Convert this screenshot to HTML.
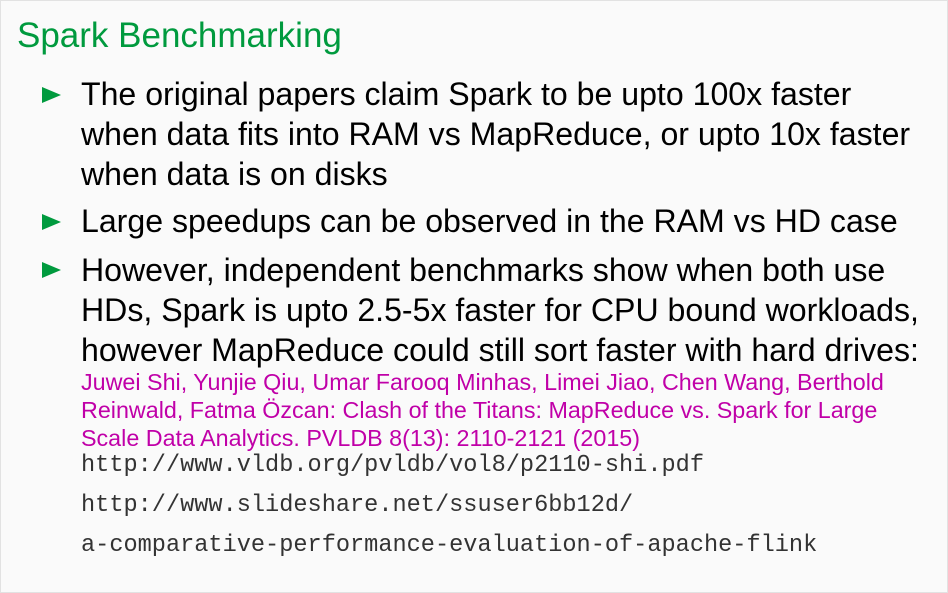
<!DOCTYPE html>
<html><head><style>
body{margin:0;width:948px;height:593px;background:#fafafa;overflow:hidden;font-family:"Liberation Sans",sans-serif;position:relative}
.frame{position:absolute;left:0;top:0;width:946px;height:591px;border:1px solid #e2e2e2}
.t{position:absolute;left:17px;top:16px;font-size:35px;color:#009a3e;white-space:nowrap}
.l{position:absolute;left:81px;font-size:32.1px;color:#000;white-space:nowrap;line-height:40px}
.tri{position:absolute;left:42px;width:0;height:0;border-left:19px solid #009a3e;border-top:8px solid transparent;border-bottom:8px solid transparent}
.p{position:absolute;left:81px;font-size:23.3px;color:#c000a8;white-space:nowrap;line-height:28px}
.m{position:absolute;left:81px;font-family:"Liberation Mono",monospace;font-size:23.6px;color:#333;white-space:nowrap;line-height:40px}
</style></head><body>
<div class="frame"></div>
<div class="t">Spark Benchmarking</div>
<div class="tri" style="top:87px"></div>
<div class="l" style="top:74px">The original papers claim Spark to be upto 100x faster</div>
<div class="l" style="top:114px">when data fits into RAM vs MapReduce, or upto 10x faster</div>
<div class="l" style="top:154px">when data is on disks</div>
<div class="tri" style="top:214px"></div>
<div class="l" style="top:201px">Large speedups can be observed in the RAM vs HD case</div>
<div class="tri" style="top:262px"></div>
<div class="l" style="top:250px">However, independent benchmarks show when both use</div>
<div class="l" style="top:290px">HDs, Spark is upto 2.5-5x faster for CPU bound workloads,</div>
<div class="l" style="top:330px">however MapReduce could still sort faster with hard drives:</div>
<div class="p" style="top:368px">Juwei Shi, Yunjie Qiu, Umar Farooq Minhas, Limei Jiao, Chen Wang, Berthold</div>
<div class="p" style="top:396px">Reinwald, Fatma Özcan: Clash of the Titans: MapReduce vs. Spark for Large</div>
<div class="p" style="top:424px">Scale Data Analytics. PVLDB 8(13): 2110-2121 (2015)</div>
<div class="m" style="top:446px">http://www.vldb.org/pvldb/vol8/p2110-shi.pdf</div>
<div class="m" style="top:486px">http://www.slideshare.net/ssuser6bb12d/</div>
<div class="m" style="top:526px">a-comparative-performance-evaluation-of-apache-flink</div>
</body></html>
